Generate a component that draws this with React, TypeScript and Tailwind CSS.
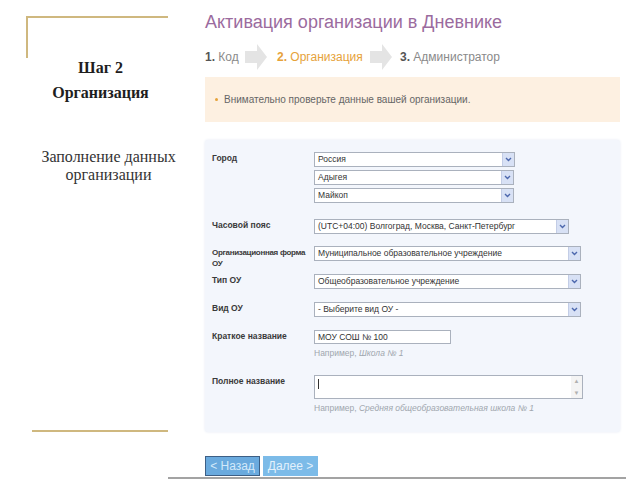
import React from "react";

const Chevron = () => (
  <svg width="7" height="5" viewBox="0 0 7 5">
    <path d="M1 1 L3.5 3.5 L6 1" fill="none" stroke="#4d68ad" strokeWidth="1.4" />
  </svg>
);

const Select = ({ value, w }: { value: string; w: string }) => (
  <div className={`flex h-[15px] ${w} items-stretch border border-[#aab1bd] bg-white`}>
    <div className="flex-1 truncate pl-[3px] text-[8.5px] leading-[13px] text-[#333]">{value}</div>
    <div className="flex w-[12px] items-center justify-center border-l border-[#c3cde6] bg-[#d8e1f5]">
      <Chevron />
    </div>
  </div>
);

const StepArrow = () => (
  <svg width="22" height="26" viewBox="0 0 22 26">
    <polygon points="0,7 12,7 12,0 22,13 12,26 12,19 0,19" fill="#e4e4e4" />
  </svg>
);

const Label = ({ children }: { children: React.ReactNode }) => (
  <div className="w-[102px] shrink-0 whitespace-nowrap pt-[1px] text-[8.5px] font-bold leading-[11px] text-[#3a3a3a]">
    {children}
  </div>
);

const Hint = ({ children }: { children: React.ReactNode }) => (
  <div className="mt-[4px] text-[8.5px] leading-[11px] text-[#a0a6ae]">{children}</div>
);

export default function App() {
  return (
    <div className="flex h-[480px] w-[640px] flex-col overflow-hidden bg-white font-['Liberation_Sans',Arial,sans-serif]">
      <div className="flex h-[477px]">
        {/* LEFT SIDE */}
        <div className="w-[201px] shrink-0 font-['Liberation_Serif',serif]">
          <div className="ml-[26px] mt-[16px] h-[42px] w-[142px] border-l-2 border-t-2 border-[#cfb87f]" />
          <div className="text-center text-[16px] font-bold leading-[20px] text-[#1e1e1e]">Шаг 2</div>
          <div className="mt-[5px] text-center text-[16px] font-bold leading-[20px] text-[#1e1e1e]">Организация</div>
          <div className="mt-[45px] pl-[16px] text-center text-[16px] leading-[18px] text-[#333]">
            Заполнение данных
            <br />
            организации
          </div>
          <div className="ml-[32px] mt-[246px] h-[2px] w-[136px] bg-[#cfb87f]" />
        </div>

        {/* RIGHT SIDE */}
        <div className="flex w-[419px] flex-col pl-[4px]">
          <h1 className="pt-[12px] text-[18px] leading-[20px] text-[#9b6b9e]">Активация организации в Дневнике</h1>

          <div className="mt-[12px] flex h-[26px] items-center text-[12px] text-[#8a8a8a]">
            <span className="w-[40px]">
              <b className="text-[#555]">1.</b> Код
            </span>
            <StepArrow />
            <span className="ml-[10px] w-[93px] text-[#e6a23a]">
              <b>2.</b> Организация
            </span>
            <StepArrow />
            <span className="ml-[8px]">
              <b className="text-[#555]">3.</b> Администратор
            </span>
          </div>

          <div className="mt-[7px] flex h-[45px] items-center bg-[#fdf0e1] pl-[10px] text-[10px] text-[#666]">
            <span className="mr-[6px] inline-block h-[3px] w-[3px] rounded-full bg-[#e6a23a]" />
            Внимательно проверьте данные вашей организации.
          </div>

          {/* FORM */}
          <div className="mt-[18px] h-[292px] rounded-[3px] bg-[#f3f6fc] pl-[7px] pt-[12px] shadow-[0_0_3px_#e4e9f3]">
            <div className="flex">
              <Label>Город</Label>
              <div className="flex flex-col gap-[3px]">
                <Select value="Россия" w="w-[201px]" />
                <Select value="Адыгея" w="w-[200px]" />
                <Select value="Майкоп" w="w-[200px]" />
              </div>
            </div>

            <div className="mt-[16px] flex">
              <Label>Часовой пояс</Label>
              <Select value="(UTC+04:00) Волгоград, Москва, Санкт-Петербург" w="w-[255px]" />
            </div>

            <div className="mt-[12px] flex h-[15px]">
              <div className="w-[102px] shrink-0 whitespace-nowrap pt-[1px] text-[8px] font-bold leading-[11px] tracking-[-0.3px] text-[#3a3a3a]">
                Организационная форма
                <br />
                ОУ
              </div>
              <Select value="Муниципальное образовательное учреждение" w="w-[267px]" />
            </div>

            <div className="mt-[13px] flex">
              <Label>Тип ОУ</Label>
              <Select value="Общеобразовательное учреждение" w="w-[267px]" />
            </div>

            <div className="mt-[13px] flex">
              <Label>Вид ОУ</Label>
              <Select value="- Выберите вид ОУ -" w="w-[267px]" />
            </div>

            <div className="mt-[13px] flex">
              <Label>Краткое название</Label>
              <div>
                <div className="h-[14px] w-[137px] border border-[#aab1bd] bg-white pl-[3px] text-[8.5px] leading-[12px] text-[#333]">
                  МОУ СОШ № 100
                </div>
                <Hint>
                  Например, <i>Школа № 1</i>
                </Hint>
              </div>
            </div>

            <div className="mt-[16px] flex">
              <Label>Полное название</Label>
              <div>
                <div className="flex h-[24px] w-[269px] border border-[#aab1bd] bg-white">
                  <div className="flex-1 pl-[3px] pt-[3px]">
                    <div className="h-[10px] w-px bg-[#333]" />
                  </div>
                  <div className="flex w-[11px] flex-col justify-between bg-[#f4f4f4] py-[1px] text-center text-[6px] leading-[8px] text-[#b0b0b0]">
                    <span>▲</span>
                    <span>▼</span>
                  </div>
                </div>
                <Hint>
                  Например, <i>Средняя общеобразовательная школа № 1</i>
                </Hint>
              </div>
            </div>
          </div>

          <div className="mt-[24px] flex gap-[3px]">
            <button className="h-[20px] w-[55px] border border-[#3d5f85] bg-[#6aaade] text-[12px] text-[#d3e9fa]">
              &lt; Назад
            </button>
            <button className="h-[20px] w-[55px] bg-[#7cbbe8] text-[12px] text-[#e2f1fc]">Далее &gt;</button>
          </div>
        </div>
      </div>
      <div className="ml-[168px] h-[1.5px] w-[458px] bg-[#a3a3a3]" />
    </div>
  );
}
